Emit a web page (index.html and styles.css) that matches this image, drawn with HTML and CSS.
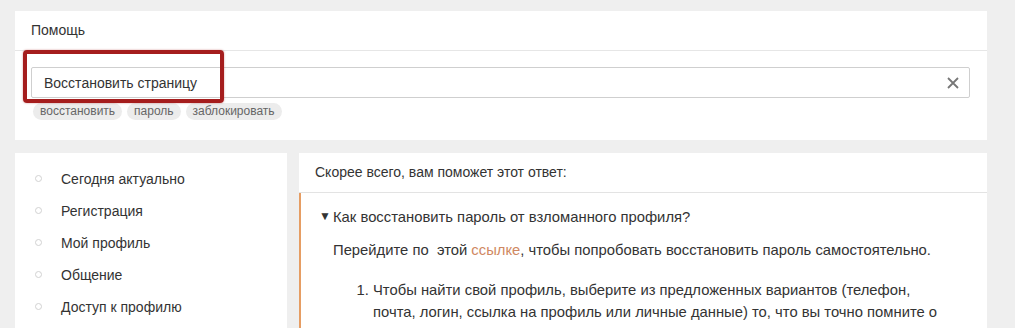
FILE: index.html
```html
<!DOCTYPE html>
<html lang="ru">
<head>
    <meta charset="UTF-8">
    <title>Помощь</title>
    <link rel="stylesheet" href="styles.css">
</head>
<body>
    <div class="page">
        <!-- Search card -->
        <div class="card search-card">
            <div class="card-title">Помощь</div>
            <div class="search-body">
                <div class="search-field">
                    <input class="search-input" type="text" value="Восстановить страницу">
                    <span class="search-clear">
                        <svg width="12" height="12" viewBox="0 0 12 12">
                            <path d="M1 1 L11 11 M11 1 L1 11" stroke="#777" stroke-width="1.8" fill="none"/>
                        </svg>
                    </span>
                    <div class="highlight"></div>
                </div>
                <div class="tags">
                    <span class="tag">восстановить</span>
                    <span class="tag">пароль</span>
                    <span class="tag">заблокировать</span>
                </div>
            </div>
        </div>

        <div class="columns">
            <!-- Topics -->
            <div class="card topics">
                <ul class="topic-list">
                    <li>Сегодня актуально</li>
                    <li>Регистрация</li>
                    <li>Мой профиль</li>
                    <li>Общение</li>
                    <li>Доступ к профилю</li>
                </ul>
            </div>

            <!-- Answer -->
            <div class="card answer">
                <div class="answer-head">Скорее всего, вам поможет этот ответ:</div>
                <div class="answer-body">
                    <div class="question"><span class="arrow">&#9660;</span>Как восстановить пароль от взломанного профиля?</div>
                    <p class="answer-text">Перейдите по &nbsp;этой <a href="#">ссылке</a>, чтобы попробовать восстановить пароль самостоятельно.</p>
                    <ol class="steps">
                        <li>Чтобы найти свой профиль, выберите из предложенных вариантов (телефон, почта, логин, ссылка на профиль или личные данные) то, что вы точно помните о своём профиле.</li>
                    </ol>
                </div>
            </div>
        </div>
    </div>
</body>
</html>
```

FILE: styles.css
```css
body {
    margin: 0;
    background: #efefef;
    font-family: "Liberation Sans", Arial, sans-serif;
    color: #333;
    overflow: hidden;
}
.page {
    padding: 11px 28px 0 15px;
}
.card {
    background: #fff;
}
.search-card {
    height: 129px;
}
.card-title {
    height: 39px;
    line-height: 39px;
    padding-left: 16px;
    font-size: 14px;
    color: #333;
    border-bottom: 1px solid #e6e6e6;
}
.search-body {
    padding: 16px 17px 0 16px;
}
.search-field {
    position: relative;
    height: 31px;
}
.search-input {
    box-sizing: border-box;
    width: 100%;
    height: 31px;
    border: 1px solid #cfcfcf;
    border-radius: 2px;
    padding: 0 12px;
    font-family: "Liberation Sans", Arial, sans-serif;
    font-size: 14px;
    color: #333;
    outline: none;
}
.search-clear {
    position: absolute;
    right: 11px;
    top: 10px;
    line-height: 0;
}
.highlight {
    position: absolute;
    left: -8px;
    top: -17px;
    width: 193px;
    height: 45px;
    border: 4px solid #a51d1d;
    border-radius: 4px;
    box-shadow: 0 0 2px rgba(165, 29, 29, 0.5);
}
.tags {
    display: flex;
    gap: 5px;
    margin-top: 5px;
    padding-left: 2px;
}
.tag {
    background: #ececec;
    border-radius: 9px;
    padding: 0 7px;
    height: 17px;
    line-height: 17px;
    font-size: 12px;
    color: #666;
}
.columns {
    display: flex;
    gap: 12px;
    margin-top: 13px;
}
.topics {
    width: 272px;
    height: 200px;
    flex: none;
}
.topic-list {
    list-style: none;
    margin: 0;
    padding: 10px 0 0 0;
}
.topic-list li {
    position: relative;
    height: 32px;
    line-height: 32px;
    padding-left: 46px;
    font-size: 14px;
    color: #333;
}
.topic-list li::before {
    content: "";
    position: absolute;
    left: 20px;
    top: 12px;
    width: 5px;
    height: 5px;
    border: 1px solid #d2d2d2;
    border-radius: 50%;
}
.answer {
    flex: 1;
    height: 200px;
    overflow: hidden;
}
.answer-head {
    height: 39px;
    line-height: 39px;
    padding-left: 16px;
    font-size: 14px;
    color: #333;
    border-bottom: 1px solid #e3e3e3;
}
.answer-body {
    border-left: 2px solid #e69d63;
    padding: 12px 0 0 18px;
    height: 200px;
}
.question {
    font-size: 14.8px;
    line-height: 22px;
}
.arrow {
    font-size: 12px;
    display: inline-block;
    width: 14px;
    vertical-align: 2px;
}
.answer-text {
    margin: 11px 0 0 14px;
    font-size: 14.8px;
    line-height: 22px;
}
.answer-text a {
    color: #cf8862;
    text-decoration: none;
}
.steps {
    margin: 18px 0 0 0;
    padding-left: 54px;
    padding-right: 40px;
    font-size: 14.8px;
    line-height: 22px;
}
```
